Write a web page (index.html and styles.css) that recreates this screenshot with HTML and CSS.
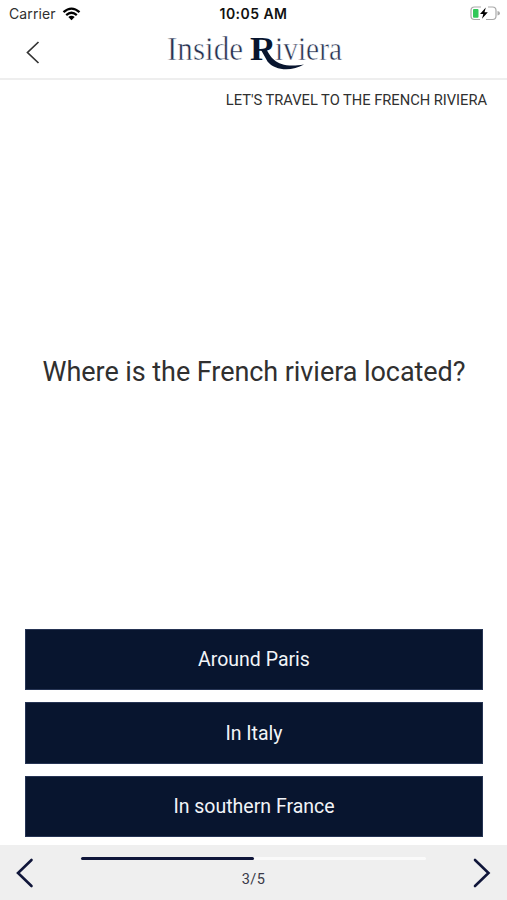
FILE: index.html
```
<!DOCTYPE html>
<html lang="en">
<head>
<meta charset="utf-8">
<meta name="viewport" content="width=device-width, initial-scale=1">
<title>Inside Riviera</title>
<link rel="stylesheet" href="styles.css">
</head>
<body>
<div class="screen">
  <div class="status">
    <div class="carrier"><span>Carrier</span>
      <svg width="19" height="14" viewBox="0 0 18 14" fill="none" stroke="#000" stroke-width="2.3"><path d="M1 5.2Q9-2 17 5.2M3.7 8.1Q9 3.5 14.3 8.1"/><path d="M5.8 10Q9 7.3 12.2 10L9 13.3Z" fill="#000" stroke="none"/></svg>
    </div>
    <time class="clock">10:05 AM</time>
    <svg class="battery" width="31" height="15" viewBox="0 0 31 15"><path d="M11 1H4.5Q1 1 1 4.5V10Q1 13.5 4.5 13.5H10M18 1H22.5Q26 1 26 4.5V10Q26 13.5 22.5 13.5H16" fill="none" stroke="#a9a9a9" stroke-width="1.2"/><path d="M27.5 5Q30 5.5 30 7.3T27.5 9.5Z" fill="#aaa"/><rect x="3" y="3" width="5.5" height="8.7" rx="1" fill="#31c759"/><path d="M15.8 1.5L10 8H13.3L12 12.7L17.8 6.2H14.5Z" fill="#000"/></svg>
  </div>
  <header class="header">
    <svg class="back" width="16" height="26" viewBox="0 0 16 26"><path d="M13.5 3L2.5 13.5L13.5 24"/></svg>
    <svg class="logo" width="178" height="46" viewBox="0 -6 178 46">
      <defs><clipPath id="leg"><path d="M80-10H115V17.5H98V40H80Z"/></clipPath></defs>
      <text class="thin" x="2" y="27" textLength="76" lengthAdjust="spacingAndGlyphs">Inside</text>
      <text class="bold" x="85" y="27" textLength="26" lengthAdjust="spacingAndGlyphs" clip-path="url(#leg)">R</text>
      <text class="thin" x="110" y="27" textLength="67" lengthAdjust="spacingAndGlyphs">iviera</text>
      <path d="M95.5 16L101 15.5C106 25 112 36 139 31.5C127 38.5 110 38 102.5 28.5Z" fill="#08152f"/>
    </svg>
  </header>
  <main class="content">
    <div class="topic">LET'S TRAVEL TO THE FRENCH RIVIERA</div>
    <h1 class="question">Where is the French riviera located?</h1>
    <div class="answers">
      <button class="answer">Around Paris</button>
      <button class="answer">In Italy</button>
      <button class="answer">In southern France</button>
    </div>
  </main>
  <footer class="footer">
    <svg class="nav" width="20" height="32" viewBox="0 0 20 32"><path d="M16.5 3L3 16L16.5 29"/></svg>
    <div class="progress"><div class="track"><div class="fill"></div></div><span>3/5</span></div>
    <svg class="nav" width="20" height="32" viewBox="0 0 20 32"><path d="M3 3L16.5 16L3 29"/></svg>
  </footer>
</div>
</body>
</html>
```
FILE: styles.css
```
* { box-sizing: border-box; }
body { margin: 0; background: #fff; font-family: Roboto, sans-serif; color: #303030; }
.screen { height: 900px; display: flex; flex-direction: column; }
.status { height: 27px; flex: none; display: grid; grid-template-columns: 1fr auto 1fr; align-items: center; padding: 0 6px 0 9px; font-family: Inter, sans-serif; }
.carrier { display: flex; align-items: center; gap: 6px; font-size: 14px; letter-spacing: .1px; }
.clock { font-size: 14px; font-weight: 600; color: #111; letter-spacing: .45px; margin-left: -3px; }
.battery { justify-self: end; }
.header { height: 53px; flex: none; display: grid; grid-template-columns: 1fr 178px 1fr; border-bottom: 2px solid #eee; }
.back { margin: 12px 0 0 25px; fill: none; stroke: #333; stroke-width: 1.7; }
.logo { overflow: visible; }
.thin { font: 34px "Liberation Serif", serif; fill: #26304f; stroke: #fff; stroke-width: .55px; }
.bold { font: bold 34px "Liberation Serif", serif; fill: #08152f; }
.content { flex: 1; display: flex; flex-direction: column; padding: 12px 24px 8px 25px; }
.topic { align-self: flex-end; margin-right: -4px; font-size: 14.7px; line-height: 16px; letter-spacing: -.02px; }
.question { margin: auto 0; padding-top: 6px; text-align: center; font-size: 27px; font-weight: 400; line-height: 34px; letter-spacing: -.06px; }
.answers { display: grid; gap: 12px; }
.answer { height: 61.3px; border: 1px solid #263454; background: #08152f; color: #f2f4f8; font: 19.5px Roboto, sans-serif; padding: 0; }
.footer { height: 55px; flex: none; background: #efefef; display: flex; justify-content: space-between; padding: 0 15px; }
.nav { margin-top: 12px; fill: none; stroke: #10163a; stroke-width: 2.6; stroke-linecap: round; }
.progress { width: 345px; display: flex; flex-direction: column; align-items: center; padding-top: 12px; font-size: 14.5px; color: #3a3a48; letter-spacing: .4px; }
.track { width: 100%; height: 3px; background: #fafafa; border-radius: 2px; margin-bottom: 11px; }
.fill { width: 50%; height: 100%; background: #10163a; border-radius: 2px; }
.progress span { line-height: 18px; }
```
